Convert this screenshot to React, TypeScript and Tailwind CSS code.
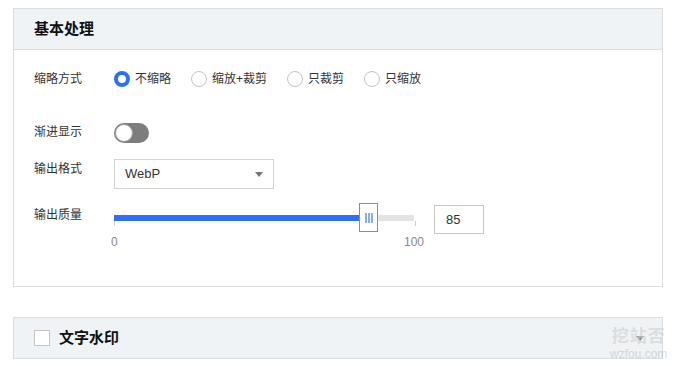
import React from 'react';

const font = { fontFamily: '"Liberation Sans", "Noto Sans CJK SC", sans-serif' };

const options = ['不缩略', '缩放+裁剪', '只裁剪', '只缩放'];

const Radio = ({ label, checked }: { label: string; checked?: boolean }) => (
  <label className="flex items-center gap-[5px] cursor-pointer">
    {checked ? (
      <span className="w-4 h-4 rounded-full border-[4px] border-[#2b6ff3] bg-white" />
    ) : (
      <span className="w-4 h-4 rounded-full border border-[#c4c4c4] bg-white" />
    )}
    <span className="text-[12px] text-[#333]">{label}</span>
  </label>
);

export default function App() {
  return (
    <div className="w-[680px] h-[366px] bg-white pt-2 pl-[13px] pr-[17px] overflow-hidden relative" style={font}>
      {/* 基本处理 */}
      <div className="border border-[#d9dce0]">
        <div className="h-[41px] bg-[#eff3f6] border-b border-[#d9dce0] flex items-center pl-5">
          <h2 className="text-[15px] font-bold text-[#111]">基本处理</h2>
        </div>

        <div className="pl-5 pt-[14px] pb-[36px]">
          {/* 缩略方式 */}
          <div className="flex items-center h-[30px]">
            <span className="w-20 text-[12px] text-[#333]">缩略方式</span>
            <div className="flex items-center gap-5">
              {options.map((o, i) => (
                <Radio key={o} label={o} checked={i === 0} />
              ))}
            </div>
          </div>

          {/* 渐进显示 */}
          <div className="flex items-center h-5 mt-[29px]">
            <span className="w-20 text-[12px] text-[#333] -mt-[3px]">渐进显示</span>
            <span className="w-[35px] h-5 rounded-full bg-[#7d7d7d] flex items-center pl-[1px]">
              <span className="w-[18px] h-[18px] rounded-full bg-white border border-[#9a9a9a]" />
            </span>
          </div>

          {/* 输出格式 */}
          <div className="flex items-start mt-4">
            <span className="w-20 text-[12px] leading-[20px] text-[#333]">输出格式</span>
            <div className="w-[160px] h-[30px] border border-[#d4d4d4] flex items-center justify-between pl-[10px] pr-[10px]">
              <span className="text-[13px] text-[#333]">WebP</span>
              <svg width="8" height="5" viewBox="0 0 8 5">
                <path d="M0 0h8L4 5z" fill="#777" />
              </svg>
            </div>
          </div>

          {/* 输出质量 */}
          <div className="flex items-start mt-[14px]">
            <span className="w-20 text-[12px] leading-[20px] text-[#333] mt-[2px]">输出质量</span>
            <div className="flex flex-col">
              <div className="flex items-start">
                <div className="relative w-[300px] h-[29px]">
                  <div className="absolute left-0 right-0 top-[12px] h-[6px] bg-[#e4e4e4]">
                    <div className="h-full bg-[#2d6ff6]" style={{ width: 247 }} />
                  </div>
                  <span className="absolute left-0 top-[18px] w-px h-[5px] bg-[#ccc]" />
                  <span className="absolute left-[301px] top-[18px] w-px h-[5px] bg-[#ccc]" />
                  <div className="absolute left-[245px] top-0 w-[19px] h-[29px] bg-white border-[1.5px] border-[#5e8ff7] flex items-center justify-center gap-[1px]">
                    <span className="w-[2px] h-[10px] bg-[#89abf6]" />
                    <span className="w-[2px] h-[10px] bg-[#89abf6]" />
                    <span className="w-[2px] h-[10px] bg-[#89abf6]" />
                  </div>
                </div>
                <div className="ml-5 mt-[2px] w-[50px] h-[29px] border border-[#c6c6c6] flex items-center pl-[11px]">
                  <span className="text-[13px] text-[#333]">85</span>
                </div>
              </div>
              <div className="flex justify-between w-[313px] -ml-[3px] text-[12px] leading-[16px] text-[#888]">
                <span>0</span>
                <span>100</span>
              </div>
            </div>
          </div>
        </div>
      </div>

      {/* 文字水印 */}
      <div className="mt-[30px] h-[42px] border border-[#d9dce0] bg-[#eff3f6] flex items-center pl-5 pr-4">
        <span className="w-4 h-4 border border-[#c4c4c4] bg-white mr-[9px]" />
        <span className="text-[15px] font-bold text-[#111]">文字水印</span>
        <svg className="ml-auto mr-[2px]" width="8" height="5" viewBox="0 0 8 5">
          <path d="M0 0h8L4 5z" fill="#888" />
        </svg>
      </div>

      {/* watermark */}
      <div className="absolute left-[610px] top-[327px] flex flex-col items-center pointer-events-none opacity-60">
        <span className="text-[17px] font-bold leading-[20px] text-[#cfcfcf] tracking-[1px]">挖站否</span>
        <span className="text-[12px] leading-[14px] text-[#c4c4c4]">wzfou.com</span>
      </div>
    </div>
  );
}
